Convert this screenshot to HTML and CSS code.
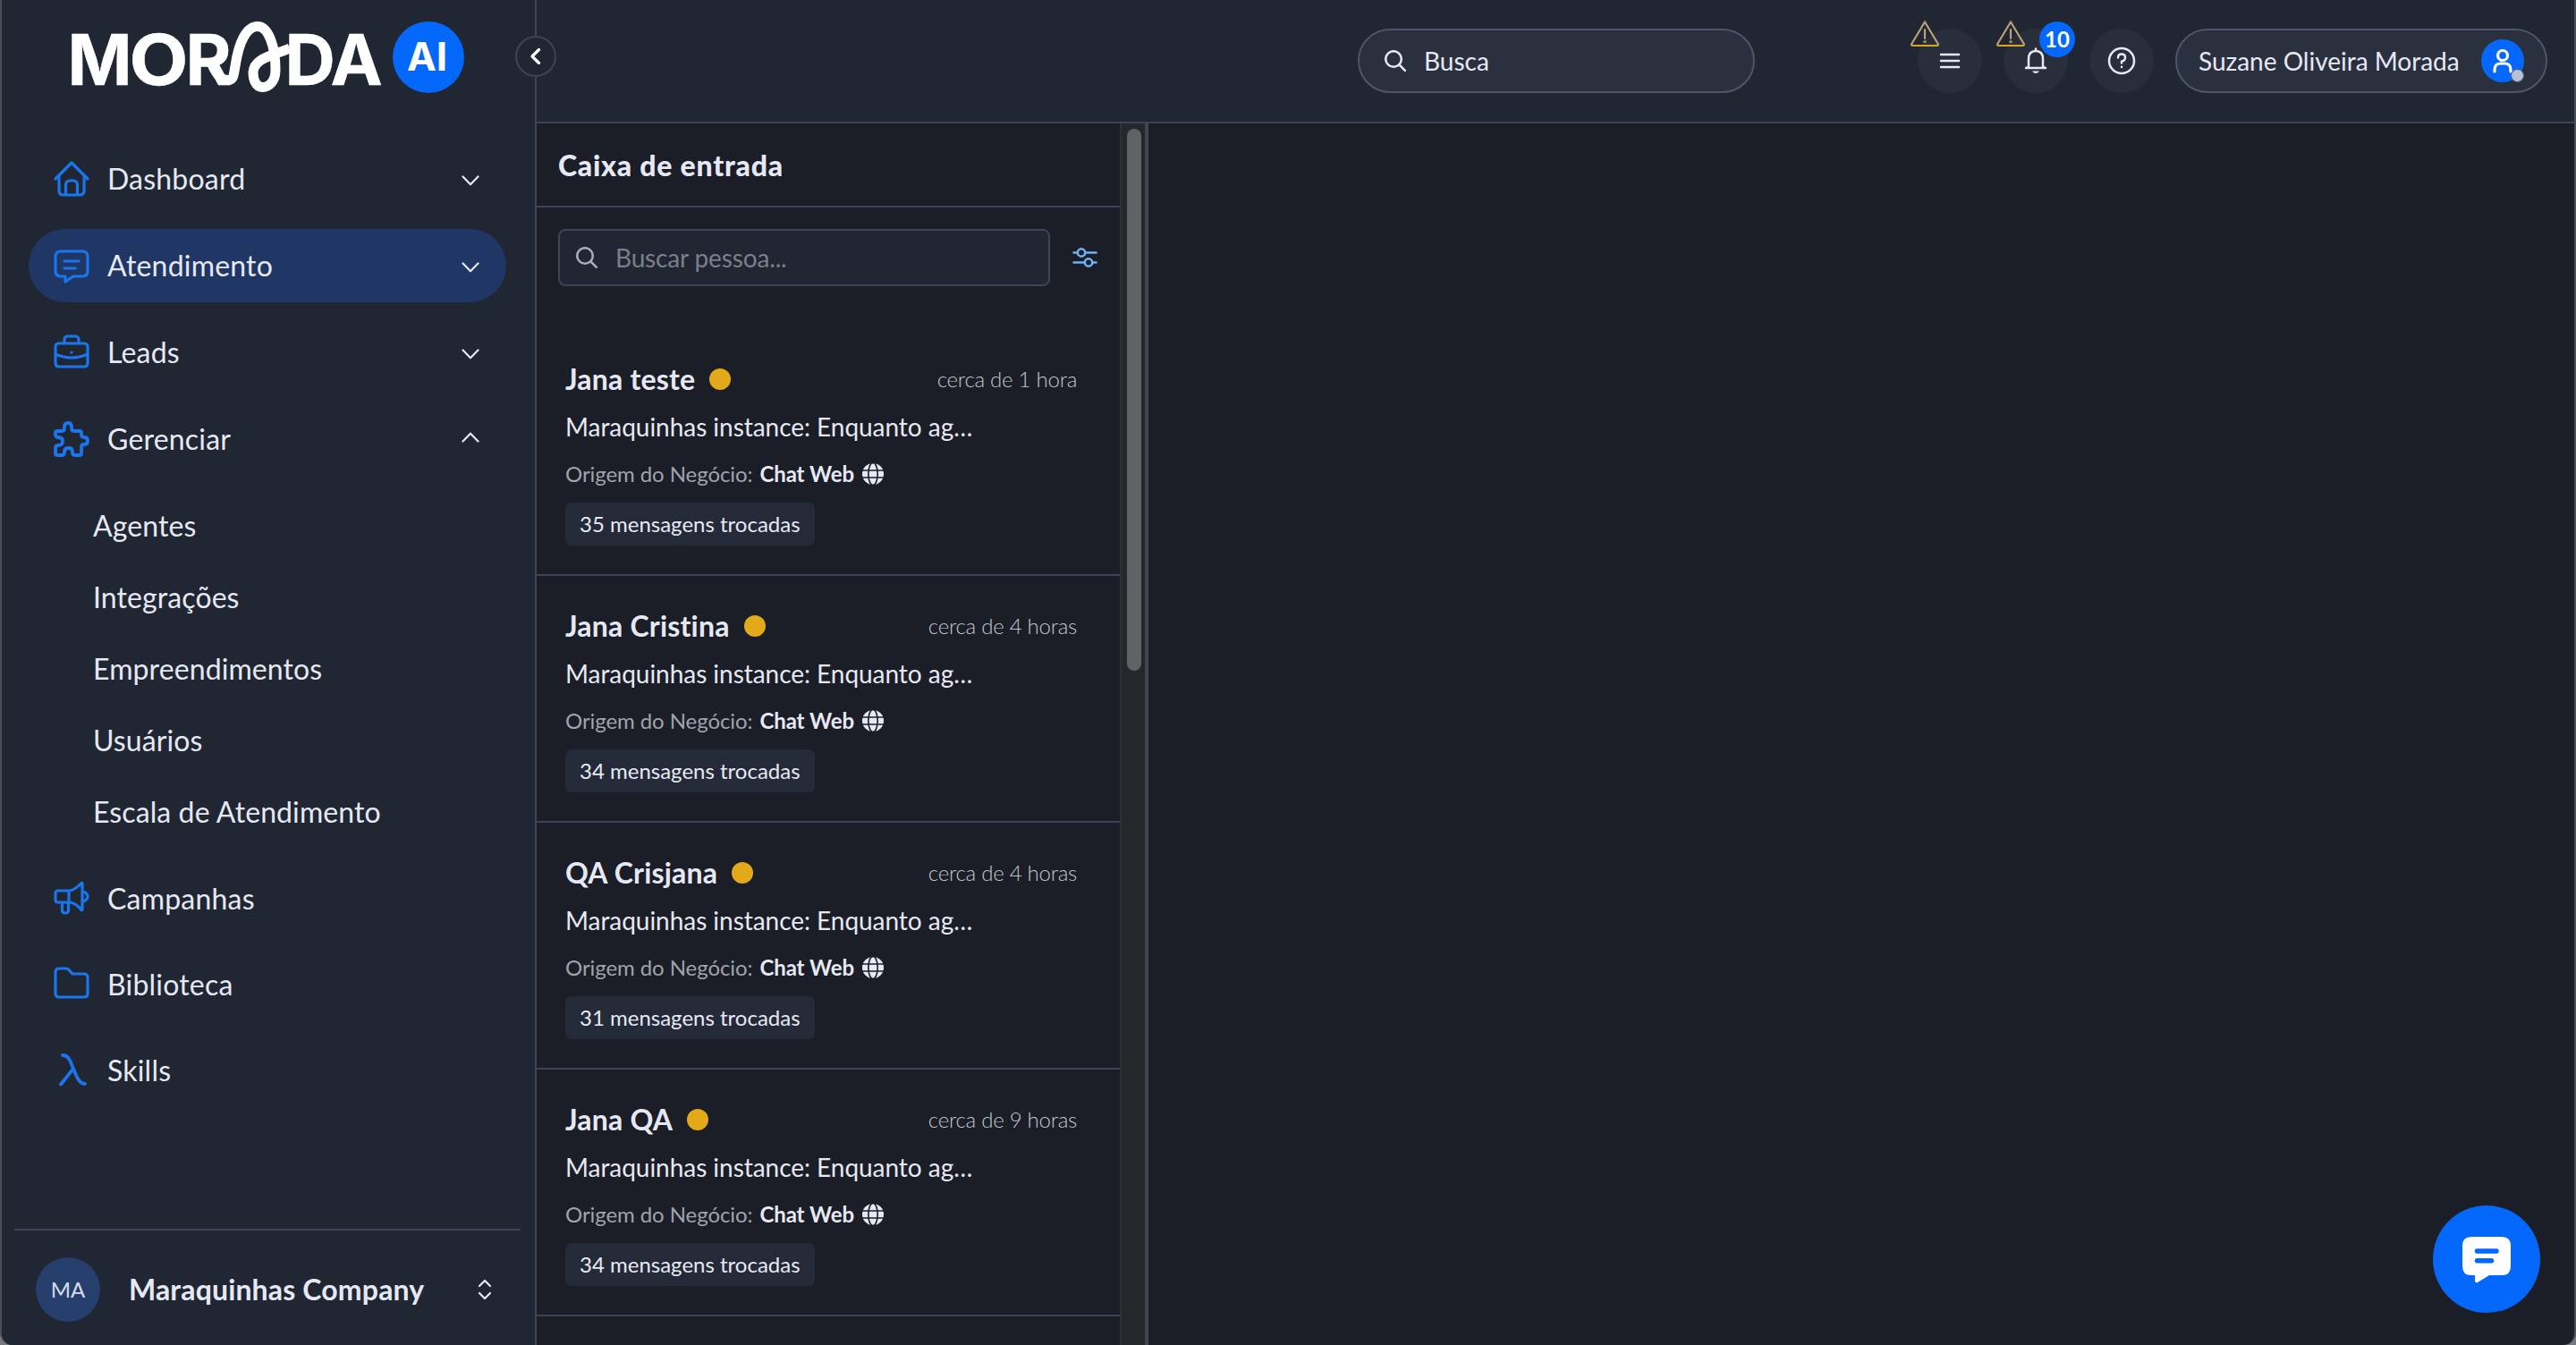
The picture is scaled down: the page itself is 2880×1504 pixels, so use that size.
FILE: index.html
```html
<!DOCTYPE html>
<html lang="pt-BR">
<head>
<meta charset="utf-8">
<title>Morada AI</title>
<link rel="stylesheet" href="styles.css">
</head>
<body>
<svg class="defs" width="0" height="0">
  <symbol id="down" viewBox="0 0 20 12"><path d="M1.500 1.500L10 10.300 18.500 1.500"/></symbol>
  <symbol id="search" viewBox="0 0 24 24"><circle cx="10" cy="10" r="8.800"/><path d="M16.500 16.500L22.800 22.800"/></symbol>
  <symbol id="warn" viewBox="0 0 32 30"><path d="M16 1.500L1.300 26Q.5 28 2.500 28h27q2 0 1.200-2z"/><path d="M16 10v10"/><circle cx="16" cy="23.600" r=".6"/><path class="warn-base" d="M2.500 28h27"/></symbol>
  <symbol id="globe" viewBox="0 0 24 24"><circle class="globe-disc" cx="12" cy="12" r="12"/><g class="globe-lines"><ellipse cx="12" cy="12" rx="5.200" ry="12.500"/><path d="M0 8h24M0 16h24"/></g></symbol>
</svg>
<div class="app">
  <aside class="sidebar">
    <svg class="logo" viewBox="0 0 480 110" width="480" height="110">
      <text class="word" y="85" x="15.500" textLength="72" lengthAdjust="spacingAndGlyphs">M</text>
      <text class="word" y="85" x="84.500" textLength="66" lengthAdjust="spacingAndGlyphs">O</text>
      <text class="word" y="85" x="147.500">R</text>
      <text class="word" y="85" x="258.500 309.500">DA</text>
      <path class="swoosh" d="M177 62C182 74 187 79.500 194 79.500C202 80 201 73 203 64C207 36 216 19.500 228 19.500C240 19.500 248 42 248 68C248 82 240 88 233 87.500C226 87 223 79 223 71C224 55 245 52 264 44"/>
      <circle class="ai-disc" cx="419" cy="54" r="40"/>
      <text class="ai" x="417.500" y="69" text-anchor="middle">AI</text>
    </svg>
    <nav class="menu">
      <a class="item"><svg class="ico" viewBox="0 0 40 40"><path d="M2 20L20 2l18 18M6 18v15q0 5 5 5h18q5 0 5-5V18M13.500 38V27q0-5 5-5h3q5 0 5 5v11"/></svg><span>Dashboard</span><svg class="caret"><use href="#down"/></svg></a>
      <a class="item active"><svg class="ico" viewBox="0 0 40 40"><path d="M8 4h24q6 0 6 6v16q0 6-6 6H22l-9 6v-6H8q-6 0-6-6V10q0-6 6-6zM12 15h16M12 23h12"/></svg><span>Atendimento</span><svg class="caret"><use href="#down"/></svg></a>
      <a class="item"><svg class="ico" viewBox="0 0 40 40"><path d="M6 10h28q4 0 4 4v18q0 4-4 4H6q-4 0-4-4V14q0-4 4-4zM12 10V6q0-4 4-4h8q4 0 4 4v4M2 22q18 8 36 0M20 20v.1"/></svg><span>Leads</span><svg class="caret"><use href="#down"/></svg></a>
      <a class="item"><svg class="ico bold" viewBox="0 0 40 40"><path d="M4 11h5q3 0 3-3V6q0-4 4-4t4 4v2q0 3 3 3h6q2 0 2 2v2q0 3 3 3 4 0 4 4t-4 4q-3 0-3 3v7q0 2-2 2h-5q-3 0-3-3v-1q0-4-4.500-4T12 34v1q0 3-3 3H4q-2 0-2-2v-6q0-3 3-3 5 0 5-4.500T5 18q-3 0-3-3v-2q0-2 2-2z"/></svg><span>Gerenciar</span><svg class="caret up"><use href="#down"/></svg></a>
      <div class="sub"><a>Agentes</a><a>Integrações</a><a>Empreendimentos</a><a>Usuários</a><a>Escala de Atendimento</a></div>
      <a class="item plain"><svg class="ico" viewBox="0 0 40 40"><path d="M5 11h12v13H5q-3 0-3-3v-7q0-3 3-3zM17 11q6 0 14-8.500 1-.5 1 .5v29q0 1-1 .5Q24 24 17 24M32 11.500q6 2 6 6t-6 6M9.500 24v9q0 3 3.500 3t3.500-3v-9"/></svg><span>Campanhas</span></a>
      <a class="item plain"><svg class="ico" viewBox="0 0 40 40"><path d="M6 2h8q2 0 3 1.500L21 8h13q4 0 4 4v18q0 4-4 4H6q-4 0-4-4V6q0-4 4-4z"/></svg><span>Biblioteca</span></a>
      <a class="item plain"><svg class="ico bold" viewBox="0 0 40 40"><path d="M10 3c7-.5 9 8 12 15s6 17 13 17M8 35.500L22 18"/></svg><span>Skills</span></a>
    </nav>
    <div class="company">
      <span class="initials">MA</span><strong>Maraquinhas Company</strong>
      <svg class="updown" viewBox="0 0 16 24"><path d="M2 8l6-6 6 6M2 16l6 6 6-6"/></svg>
    </div>
    <button class="collapse"><svg viewBox="0 0 12 18"><path d="M9.500 1.500L2 9l7.500 7.500"/></svg></button>
  </aside>
  <div class="main">
    <header class="topbar">
      <div class="pill search"><svg class="mag"><use href="#search"/></svg><span>Busca</span></div>
      <div class="actions">
        <div class="round"><svg class="warn"><use href="#warn"/></svg><svg width="24" height="24" viewBox="0 0 24 24"><path d="M2 5h20M2 12h20M2 19h20"/></svg></div>
        <div class="round"><svg class="warn"><use href="#warn"/></svg><svg width="28" height="30" viewBox="0 0 28 30"><path d="M14 1.500v2M6 22V13q0-9 8-9t8 9v9l3 1H3z"/><path class="clapper" d="M10 26.500h8q-4 5-8 0z"/></svg><b class="badge">10</b></div>
        <div class="round"><svg width="32" height="32" viewBox="0 0 32 32"><circle cx="16" cy="16" r="14"/><path d="M12 12.500q0-4 4-4t4 3.700-4 4.300v2M16 22.800v.2"/></svg></div>
      </div>
      <div class="pill user"><span>Suzane Oliveira Morada</span>
        <div class="avatar"><svg width="28" height="30" viewBox="0 0 28 30"><circle cx="14" cy="9" r="5.500"/><path d="M5 27v-2q0-7 7-7h4q7 0 7 7v2"/></svg><i class="presence"></i></div>
      </div>
    </header>
    <div class="content">
      <section class="inbox">
        <h1>Caixa de entrada</h1>
        <div class="filter"><div class="field"><svg class="mag"><use href="#search"/></svg><span>Buscar pessoa...</span></div>
          <svg class="tune" viewBox="0 0 28 24"><path d="M1.500 6.500h4M14.500 6.500h12M1.500 17.500h12M22.500 17.500h4"/><circle cx="10" cy="6.500" r="4.200"/><circle cx="18" cy="17.500" r="4.200"/></svg></div>
        <article><div class="head"><h2>Jana teste</h2><i class="dot"></i><time>cerca de 1 hora</time></div><p class="msg">Maraquinhas instance: Enquanto ag…</p><p class="origin">Origem do Negócio: <b>Chat Web</b><svg class="globe"><use href="#globe"/></svg></p><span class="tag">35 mensagens trocadas</span></article>
        <article><div class="head"><h2>Jana Cristina</h2><i class="dot"></i><time>cerca de 4 horas</time></div><p class="msg">Maraquinhas instance: Enquanto ag…</p><p class="origin">Origem do Negócio: <b>Chat Web</b><svg class="globe"><use href="#globe"/></svg></p><span class="tag">34 mensagens trocadas</span></article>
        <article><div class="head"><h2>QA Crisjana</h2><i class="dot"></i><time>cerca de 4 horas</time></div><p class="msg">Maraquinhas instance: Enquanto ag…</p><p class="origin">Origem do Negócio: <b>Chat Web</b><svg class="globe"><use href="#globe"/></svg></p><span class="tag">31 mensagens trocadas</span></article>
        <article><div class="head"><h2>Jana QA</h2><i class="dot"></i><time>cerca de 9 horas</time></div><p class="msg">Maraquinhas instance: Enquanto ag…</p><p class="origin">Origem do Negócio: <b>Chat Web</b><svg class="globe"><use href="#globe"/></svg></p><span class="tag">34 mensagens trocadas</span></article>
      </section>
      <div class="scroll"><div class="thumb"></div></div>
      <section class="conversation"></section>
    </div>
  </div>
  <button class="fab"><svg width="56" height="56" viewBox="0 0 56 56"><path class="bubble" d="M11 3h34q10 0 10 10v23q0 10-10 10H31l-13 8q-3 1-3-2v-6h-4Q1 46 1 36V13Q1 3 11 3z"/><path class="lines" d="M17.500 19H39M17.500 29.700H33.500"/></svg></button>
</div>
</body>
</html>
```

FILE: styles.css
```css
*{box-sizing:border-box}
html{background:#77787b}
body{margin:0;color:#e6e9f5;font-family:Lato,sans-serif;font-size:32px;overflow:hidden}
h1,h2,p{margin:0}
button{padding:0}
.defs{position:absolute}
svg{fill:none;stroke:#e6e9f5;stroke-width:2.500;stroke-linecap:round;stroke-linejoin:round;flex:none}
.app{display:flex;position:relative;width:2880px;height:1504px;background:#1b1e26;border:solid #4a4e56;border-width:0 2px;border-radius:0 0 14px 14px;overflow:hidden}

.sidebar{position:relative;display:flex;flex-direction:column;width:598px;flex:none;background:#212633;border-right:2px solid #3c4457}
.logo{display:block;margin:10px 0 0 58px}
.word{font:700 78px Inter,sans-serif;fill:#fff;stroke:#fff;stroke-width:.5}
.ai{font:700 44px Inter,sans-serif;fill:#fff;stroke:none}
.ai-disc{fill:#0568fd;stroke:none}
.swoosh{stroke:#fff;stroke-width:11;stroke-linecap:butt}
.menu{flex:1;padding:39px 32px 0 30px}
.item{display:flex;height:82px;margin-bottom:15px;align-items:center;padding:0 30px 0 28px;border-radius:41px;letter-spacing:.2px}
.item span{padding-bottom:2px}
.item:nth-child(4){margin-bottom:0}
.item.active{background:#203765}
.item.plain{height:96px;margin:0}
.ico{width:40px;height:40px;margin-right:20px;stroke:#1a76ec;stroke-width:3.200}
.ico.bold{stroke-width:3.800}
.caret{width:20px;height:12px;margin-left:auto;margin-top:4px;stroke-width:2.200}
.caret.up{transform:rotate(180deg);margin-top:-4px}
.sub{display:flex;flex-direction:column;padding:16px 0 9px 72px;letter-spacing:.1px}
.sub a{line-height:80px}
.company{display:flex;align-items:center;height:130px;margin:0 16px 0 14px;padding:4px 32px 0 24px;border-top:2px solid #3c4457}
.company strong{padding-bottom:1px;letter-spacing:.15px}
.initials{width:72px;height:72px;border-radius:50%;background:#263f6d;font-size:24px;line-height:72px;text-align:center;margin-right:32px;color:#d6dcea}
.updown{width:16px;height:24px;margin-left:auto;stroke-width:2.200}
.collapse{position:absolute;left:574px;top:40px;width:46px;height:46px;border:2px solid #3c4457;border-radius:50%;background:#212633;display:flex;align-items:center;justify-content:center;z-index:2}
.collapse svg{width:12px;height:18px;stroke:#fff;stroke-width:3.200}

.main{flex:1;display:flex;flex-direction:column;min-width:0}
.topbar{display:flex;align-items:center;height:138px;background:#212633;border-bottom:2px solid #3c4457;padding-right:30px;font-size:28px}
.pill{display:flex;align-items:center;height:72px;border:2px solid #4d566a;border-radius:36px;background:#2b303e}
.search{width:444px;margin-left:918px;padding-left:28px;gap:20px}
.mag{width:24px;height:24px}
.actions{display:flex;gap:24px;margin-left:182px}
.round{position:relative;display:flex;align-items:center;justify-content:center;width:72px;height:72px;border-radius:50%;background:#292e3b}
.warn{position:absolute;left:-8px;top:-9px;width:32px;height:30px;stroke:#b8a078;stroke-width:2.200}
.warn-base{stroke:#dba522}
.clapper{fill:#e6e9f5;stroke:none}
.badge{position:absolute;left:40px;top:-8px;width:40px;height:40px;border-radius:50%;background:#0568fd;color:#fff;font-size:24px;line-height:40px;text-align:center}
.user{width:416px;margin-left:24px;padding:0 24px;justify-content:space-between}
.avatar{position:relative;display:flex;align-items:center;justify-content:center;width:48px;height:48px;border-radius:50%;background:#0568fd}
.avatar svg{stroke:#fff;stroke-width:3.200}
.presence{position:absolute;right:0;bottom:0;width:15px;height:15px;border-radius:50%;background:#b6c1d8;border:1px solid #4e5a74}

.content{flex:1;display:flex}
.inbox{width:652px;font-size:24px}
.inbox h1{height:94px;border-bottom:2px solid #3c4457;padding-left:24px;line-height:93px;font-size:32px;font-weight:900;letter-spacing:.75px}
.filter{display:flex;align-items:center;padding:24px 24px 48px}
.field{display:flex;align-items:center;width:550px;height:64px;border:2px solid #3c4457;border-radius:8px;background:#212633;color:#7b7f8a;font-size:28px;padding-left:18px;gap:20px}
.field span{letter-spacing:-.15px;padding-bottom:1px}
.field .mag{stroke:#a9adb8}
.tune{width:28px;height:24px;margin-left:25px;stroke:#72b1f2}
article{height:276px;border-bottom:2px solid #3c4457;padding:36px 48px 0 32px}
.head{display:flex;align-items:center;height:40px}
.head h2{font-size:32px;line-height:40px;font-weight:700;letter-spacing:.2px}
.dot{width:24px;height:24px;border-radius:50%;background:#e3a918;margin-left:16px}
time{margin-left:auto;padding-bottom:2px;font-weight:300;color:#c3c6d0;letter-spacing:-.25px}
.msg{font-size:28px;line-height:40px;margin-top:13px;letter-spacing:-.04px}
.origin{display:flex;align-items:center;line-height:32px;margin-top:17px;color:#a0a3ad;letter-spacing:-.08px}
.origin b{color:#e6e9f5;margin-left:8px}
.globe{width:24px;height:24px;margin-left:9px}
.globe-disc{fill:#e6e9f5;stroke:none}
.globe-lines{stroke:#1b1e26;stroke-width:1.600}
.tag{display:inline-block;height:48px;line-height:48px;margin-top:16px;padding:0 16px;border-radius:6px;background:#252a38}
.scroll{width:32px;background:#25272a;border-left:2px solid #2e3032;border-right:4px solid #42454c;padding:6px 4px 0 6px}
.thumb{width:16px;height:606px;border-radius:8px;background:#616265}
.conversation{flex:1}
.fab{position:absolute;left:2718px;top:1348px;width:120px;height:120px;border:0;border-radius:50%;background:#0568fd;display:flex;align-items:center;justify-content:center}
.bubble{fill:#fff;stroke:none}
.lines{stroke:#0568fd;stroke-width:5.500}
```
